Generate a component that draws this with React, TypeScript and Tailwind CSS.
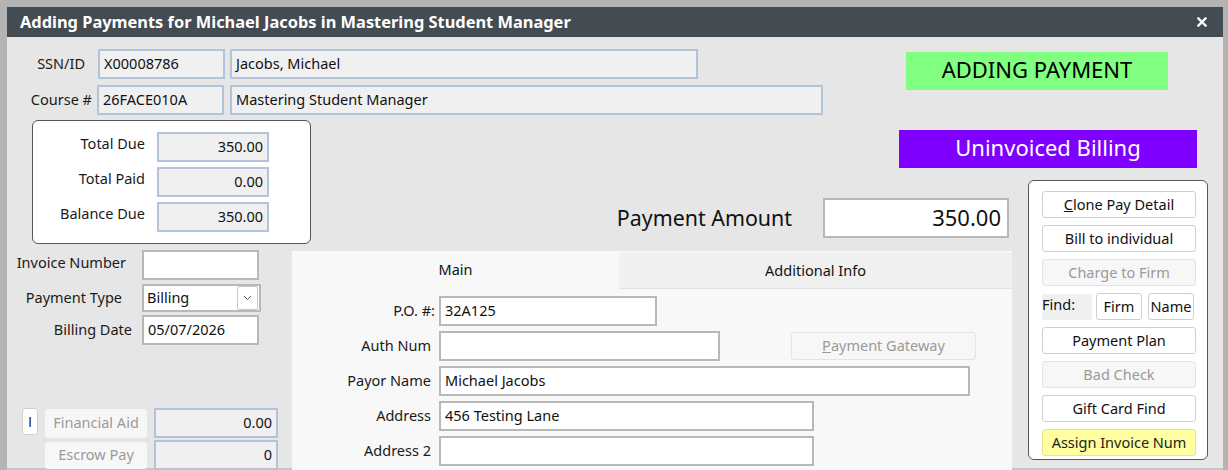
import React from "react";

const font = { fontFamily: '"Segoe UI", "Noto Sans", "Open Sans", sans-serif' };

function RoBox({ value, className = "", right = false }: { value: string; className?: string; right?: boolean }) {
  return (
    <div
      className={`flex items-center h-[30px] bg-[#f0f0f0] border-2 border-[#b3c3d8] px-[4px] text-[14.5px] text-[#111] ${right ? "justify-end" : ""} ${className}`}
    >
      {value}
    </div>
  );
}

function TextBox({ value = "", className = "" }: { value?: string; className?: string }) {
  return (
    <div className={`flex items-center h-[30px] bg-white border-2 border-[#b8b8b8] px-[4px] text-[14.5px] text-[#111] ${className}`}>
      {value}
    </div>
  );
}

function Btn({
  children,
  disabled = false,
  className = "",
}: {
  children: React.ReactNode;
  disabled?: boolean;
  className?: string;
}) {
  return (
    <div
      className={`flex items-center justify-center h-[27px] rounded-[3px] border text-[14.5px] ${
        disabled ? "bg-[#f7f7f7] border-[#e4e4e4] text-[#9a9a9a]" : "bg-white border-[#cfcfcf] text-[#111]"
      } ${className}`}
    >
      {children}
    </div>
  );
}

function FieldRow({ label, pr = "pr-[8px]", children }: { label: string; pr?: string; children: React.ReactNode }) {
  return (
    <div className="flex items-center h-[30px]">
      <div className={`w-[147px] text-right text-[14.5px] text-[#1a1a1a] ${pr}`}>{label}</div>
      {children}
    </div>
  );
}

export default function App() {
  return (
    <div style={font} className="w-[1228px] h-[470px] bg-[#b4b4b4] pl-[7px] pt-[7px] pr-[5px] overflow-hidden">
      {/* title bar */}
      <div className="h-[30px] bg-[#434b53] flex items-center justify-between pl-[13px] pr-[16px]">
        <span className="text-white font-bold text-[16.4px]">
          Adding Payments for Michael Jacobs in Mastering Student Manager
        </span>
        <svg width="10" height="10" viewBox="0 0 10 10">
          <path d="M1.5 1.5 L8.5 8.5 M8.5 1.5 L1.5 8.5" stroke="white" strokeWidth="2.4" strokeLinecap="square" />
        </svg>
      </div>

      {/* body */}
      <div className="h-[433px] bg-[#e6e6e6] grid grid-cols-[285px_723px_208px] grid-rows-[83px_60px_70px_1fr] border-b-2 border-[#c4c4c4]">
        {/* ids */}
        <div className="col-start-1 col-span-2 row-start-1 pt-[12px] flex flex-col gap-[6px]">
          <div className="flex items-center">
            <div className="w-[78px] text-right text-[14.5px] text-[#1a1a1a] mr-[13px]">SSN/ID</div>
            <RoBox value="X00008786" className="w-[127px]" />
            <RoBox value="Jacobs, Michael" className="w-[468px] ml-[5px]" />
          </div>
          <div className="flex items-center">
            <div className="w-[85px] text-right text-[14.5px] text-[#1a1a1a] mr-[5px]">Course #</div>
            <RoBox value="26FACE010A" className="w-[127px]" />
            <RoBox value="Mastering Student Manager" className="w-[593px] ml-[6px]" />
          </div>
        </div>
        <div className="col-start-2 col-span-2 row-start-1 justify-self-end self-start mt-[15px] mr-[55px] w-[262px] h-[38px] bg-[#80ff80] flex items-center justify-center pb-[3px] text-[22px] text-black">
          ADDING PAYMENT
        </div>

        {/* totals */}
        <div className="col-start-1 row-start-2 row-span-2 self-start ml-[25px] w-[279px] h-[124px] bg-white border border-[#555] rounded-[6px] pt-[11px] flex flex-col gap-[5px] relative z-10">
          {[
            ["Total Due", "350.00"],
            ["Total Paid", "0.00"],
            ["Balance Due", "350.00"],
          ].map(([l, v]) => (
            <div key={l} className="flex items-center">
              <div className="w-[112px] text-right text-[14.5px] text-[#1a1a1a] mr-[12px] -mt-[6px]">{l}</div>
              <RoBox value={v} right className="w-[112px]" />
            </div>
          ))}
        </div>

        <div className="col-start-2 col-span-2 row-start-2 justify-self-end self-start mt-[10px] mr-[26px] w-[298px] h-[38px] bg-[#8000ff] flex items-center justify-center pb-[4px] text-[22px] text-white">
          Uninvoiced Billing
        </div>

        {/* payment amount */}
        <div className="col-start-2 row-start-3 flex items-start justify-end pr-[6px] pt-[18px]">
          <div className="text-[21.4px] text-[#111] mr-[31px] mt-[4px]">Payment Amount</div>
          <div className="w-[186px] h-[40px] bg-white border-2 border-[#b8b8b8] flex items-center justify-end pr-[6px] pb-[2px] text-[22px] text-[#111]">
            350.00
          </div>
        </div>

        {/* button panel */}
        <div className="col-start-3 row-start-3 row-span-2 self-start ml-[13px] w-[180px] h-[280px] bg-white border border-[#555] rounded-[6px] pt-[10px] pl-[13px] pr-[11px] flex flex-col gap-[7px]">
          <Btn>
            <span>
              <span className="underline">C</span>lone Pay Detail
            </span>
          </Btn>
          <Btn>Bill to individual</Btn>
          <Btn disabled>Charge to Firm</Btn>
          <div className="flex items-center h-[27px]">
            <div className="w-[50px] h-[26px] bg-[#f0f0f0] text-[14.5px] text-[#111] leading-[20px]">Find:</div>
            <Btn className="w-[46px] ml-[4px]">Firm</Btn>
            <Btn className="w-[46px] ml-[6px]">Name</Btn>
          </div>
          <Btn>Payment Plan</Btn>
          <Btn disabled>Bad Check</Btn>
          <Btn>Gift Card Find</Btn>
          <Btn className="!bg-[#ffffa0] !border-[#e6e68c] !text-[#222]">Assign Invoice Num</Btn>
        </div>

        {/* left fields */}
        <div className="col-start-1 row-start-4 flex flex-col text-[14.5px] text-[#1a1a1a]">
          <div className="flex items-center">
            <div className="w-[119px] text-right mr-[16px] -mt-[4px]">Invoice Number</div>
            <TextBox className="w-[117px]" />
          </div>
          <div className="flex items-center mt-[4px]">
            <div className="w-[115px] text-right mr-[20px]">Payment Type</div>
            <div className="w-[119px] h-[28px] bg-white border-2 border-[#b8b8b8] flex items-center justify-between pl-[3px] pr-[1px] text-[14.5px] text-[#111]">
              Billing
              <div className="w-[21px] h-[24px] border border-[#c8c8c8] rounded-[2px] flex items-center justify-center">
                <svg width="9" height="6" viewBox="0 0 9 6">
                  <path d="M1 1 L4.5 4.5 L8 1" stroke="#555" strokeWidth="1" fill="none" />
                </svg>
              </div>
            </div>
          </div>
          <div className="flex items-center mt-[3px]">
            <div className="w-[125px] text-right mr-[10px]">Billing Date</div>
            <TextBox value="05/07/2026" className="w-[117px] h-[29px]" />
          </div>

          <div className="flex items-start mt-[63px] ml-[15px]">
            <div
              style={{ fontFamily: '"Open Sans", "Liberation Sans", sans-serif' }}
              className="w-[16px] h-[27px] bg-white border border-[#cfcfcf] rounded-[3px] flex items-center justify-center text-[14.5px] text-[#111]"
            >
              I
            </div>
            <div className="flex flex-col ml-[7px] gap-[2px]">
              <div className="flex items-center">
                <Btn disabled className="w-[102px] h-[29px] !border-[#f7f7f7]">Financial Aid</Btn>
                <RoBox value="0.00" right className="w-[124px] h-[29px] ml-[7px]" />
              </div>
              <div className="flex items-center">
                <Btn disabled className="w-[102px] h-[26px] !border-[#f7f7f7]">Escrow Pay</Btn>
                <RoBox value="0" right className="w-[124px] h-[28px] ml-[7px]" />
              </div>
            </div>
          </div>
        </div>

        {/* tab panel */}
        <div className="col-start-2 row-start-4 mt-[1px] w-[720px] bg-[#f8f8f8] flex flex-col">
          <div className="flex h-[38px]">
            <div className="w-[327px] flex items-center justify-center text-[14.5px] text-[#111]">Main</div>
            <div className="flex-1 mt-[2px] bg-[#f0f0f0] border-b border-[#e2e2e2] flex items-center justify-center text-[14.5px] text-[#111]">
              Additional Info
            </div>
          </div>
          <div className="flex flex-col gap-[5px] pt-[7px]">
            <FieldRow label="P.O. #:" pr="pr-[4px]">
              <TextBox value="32A125" className="w-[218px]" />
            </FieldRow>
            <FieldRow label="Auth Num">
              <TextBox className="w-[281px]" />
              <Btn disabled className="w-[185px] h-[28px] ml-[71px]">
                <span>
                  <span className="underline">P</span>ayment Gateway
                </span>
              </Btn>
            </FieldRow>
            <FieldRow label="Payor Name">
              <TextBox value="Michael Jacobs" className="w-[531px]" />
            </FieldRow>
            <FieldRow label="Address">
              <TextBox value="456 Testing Lane" className="w-[375px]" />
            </FieldRow>
            <FieldRow label="Address 2">
              <TextBox className="w-[375px]" />
            </FieldRow>
          </div>
        </div>
      </div>
    </div>
  );
}
